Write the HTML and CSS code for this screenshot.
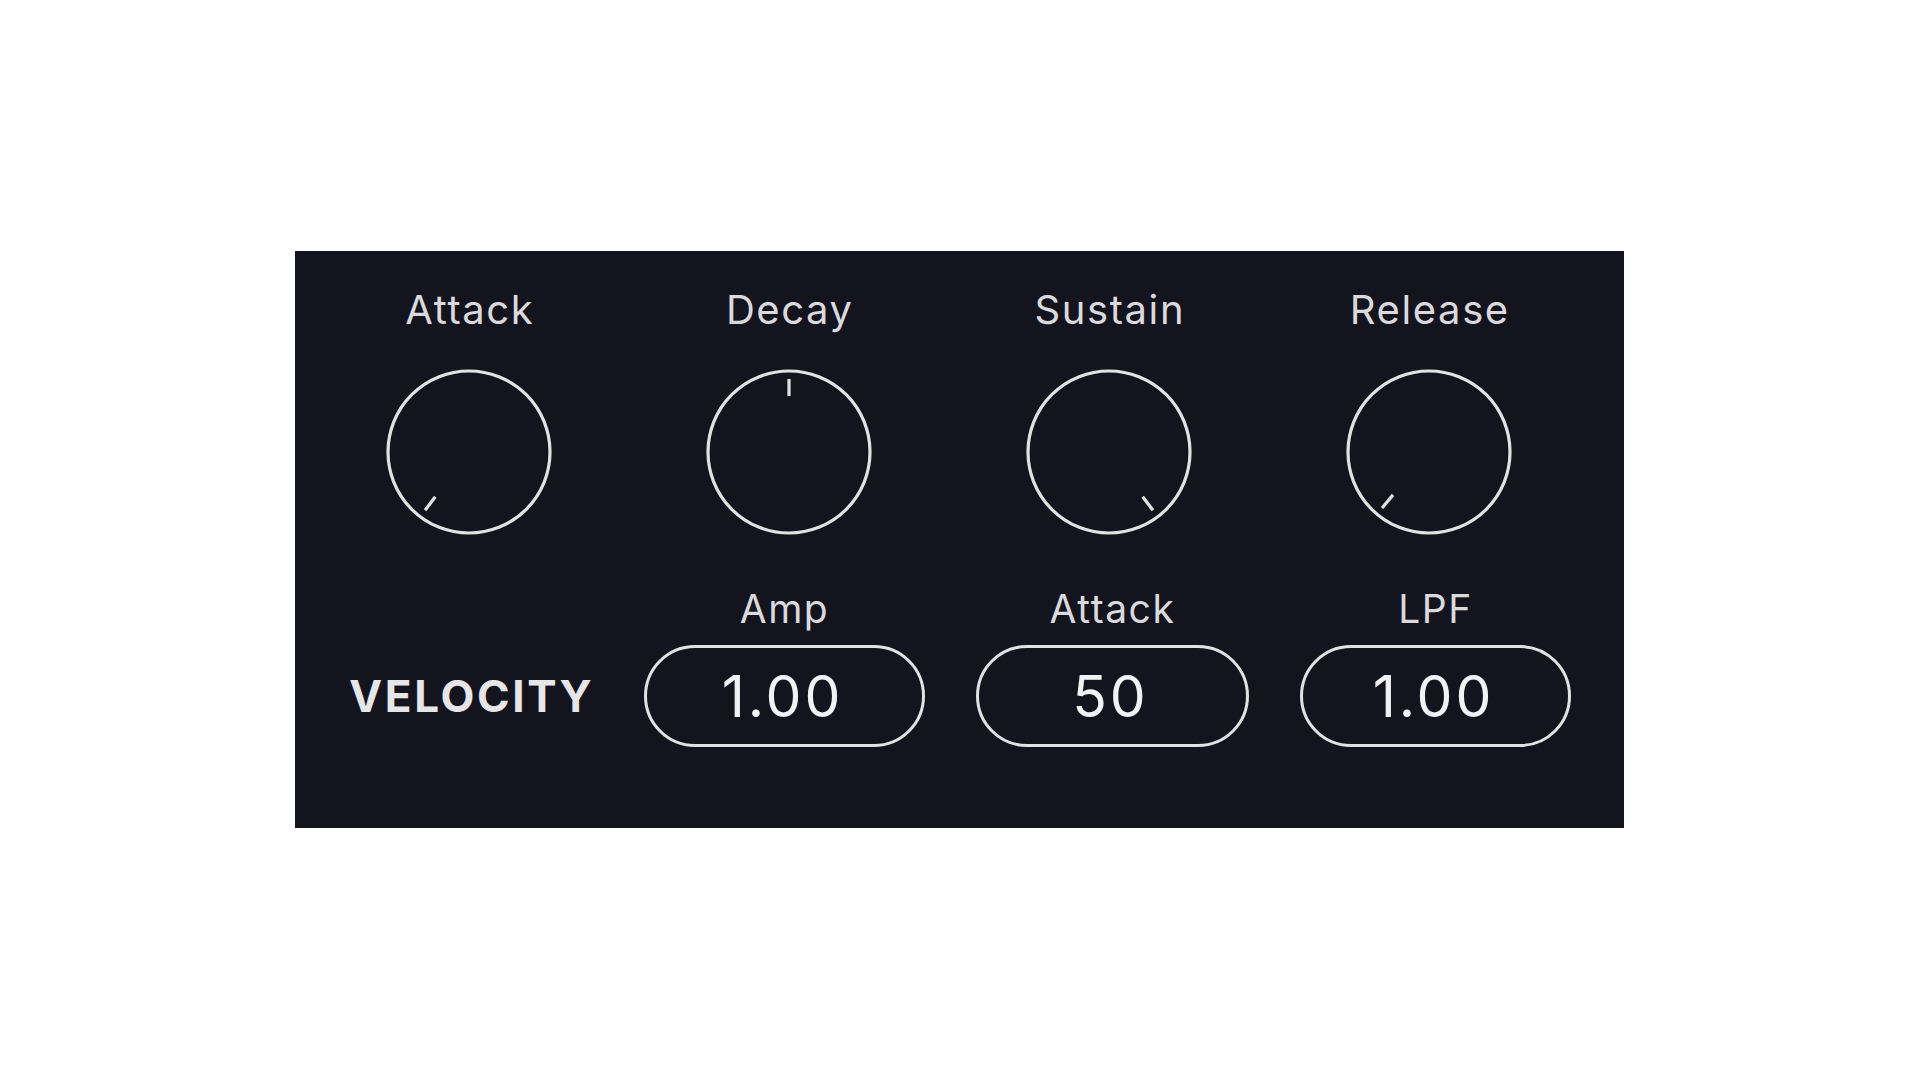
FILE: index.html
```html
<!DOCTYPE html>
<html lang="en">
<head>
<meta charset="utf-8">
<title>Envelope</title>
<link rel="stylesheet" href="styles.css">
</head>
<body>
<div class="panel">
  <div class="knob-row">
    <div class="knob-col">
      <div class="label">Attack</div>
      <svg class="knob" viewBox="0 0 170 170" width="170" height="170">
        <circle class="ring" cx="85" cy="85" r="81"/>
        <line class="tick" x1="85" y1="12" x2="85" y2="29" transform="rotate(-143 85 85)"/>
      </svg>
    </div>
    <div class="knob-col">
      <div class="label">Decay</div>
      <svg class="knob" viewBox="0 0 170 170" width="170" height="170">
        <circle class="ring" cx="85" cy="85" r="81"/>
        <line class="tick" x1="85" y1="12" x2="85" y2="29" transform="rotate(0 85 85)"/>
      </svg>
    </div>
    <div class="knob-col">
      <div class="label">Sustain</div>
      <svg class="knob" viewBox="0 0 170 170" width="170" height="170">
        <circle class="ring" cx="85" cy="85" r="81"/>
        <line class="tick" x1="85" y1="12" x2="85" y2="29" transform="rotate(143 85 85)"/>
      </svg>
    </div>
    <div class="knob-col">
      <div class="label">Release</div>
      <svg class="knob" viewBox="0 0 170 170" width="170" height="170">
        <circle class="ring" cx="85" cy="85" r="81"/>
        <line class="tick" x1="85" y1="12" x2="85" y2="29" transform="rotate(-140 85 85)"/>
      </svg>
    </div>
  </div>
  <div class="value-row">
    <div class="velocity-col">
      <div class="section-title">VELOCITY</div>
    </div>
    <div class="value-col">
      <div class="sublabel">Amp</div>
      <div class="pill">1.00</div>
    </div>
    <div class="value-col">
      <div class="sublabel">Attack</div>
      <div class="pill">50</div>
    </div>
    <div class="value-col">
      <div class="sublabel">LPF</div>
      <div class="pill">1.00</div>
    </div>
  </div>
</div>
</body>
</html>
```
FILE: styles.css
```css
* { box-sizing: border-box; }

html, body {
  margin: 0;
  padding: 0;
  background: #ffffff;
}

body {
  padding: 251px 0 0 295px;
  font-family: "Inter", "Liberation Sans", sans-serif;
}

.panel {
  width: 1329px;
  height: 577px;
  background: #14141e;
  padding-top: 39px;
  display: flex;
  flex-direction: column;
}

.knob-row {
  display: grid;
  grid-template-columns: repeat(4, 320px);
  padding-left: 14px;
}

.knob-col {
  display: flex;
  flex-direction: column;
  align-items: center;
}

.label {
  font-size: 40px;
  line-height: 40px;
  font-weight: 400;
  letter-spacing: 0.04em;
  margin-right: -0.04em;
  color: #dadade;
}

.knob {
  display: block;
  margin-top: 37px;
}

.ring {
  fill: none;
  stroke: #e2e2e4;
  stroke-width: 3.2;
}

.tick {
  stroke: #e2e2e4;
  stroke-width: 3.2;
}

.value-row {
  display: grid;
  grid-template-columns: 245px 281px 273px 271px;
  column-gap: 51px;
  padding-left: 53px;
  margin-top: 52px;
}

.velocity-col {
  display: flex;
  flex-direction: column;
  justify-content: flex-end;
}

.section-title {
  height: 102px;
  display: flex;
  align-items: center;
  justify-content: center;
  font-size: 44px;
  font-weight: 700;
  letter-spacing: 0.06em;
  margin-right: -0.06em;
  color: #e6e6e8;
  white-space: nowrap;
}

.value-col {
  display: flex;
  flex-direction: column;
  align-items: stretch;
}

.sublabel {
  text-align: center;
  font-size: 39px;
  line-height: 39px;
  font-weight: 400;
  letter-spacing: 0.04em;
  color: #dadade;
}

.pill {
  margin-top: 17px;
  height: 102px;
  border: 3px solid #e2e2e4;
  border-radius: 51px;
  display: flex;
  align-items: center;
  justify-content: center;
  padding-right: 4px;
  font-size: 57px;
  font-weight: 400;
  letter-spacing: 0.05em;
  color: #f2f2f4;
}
```
